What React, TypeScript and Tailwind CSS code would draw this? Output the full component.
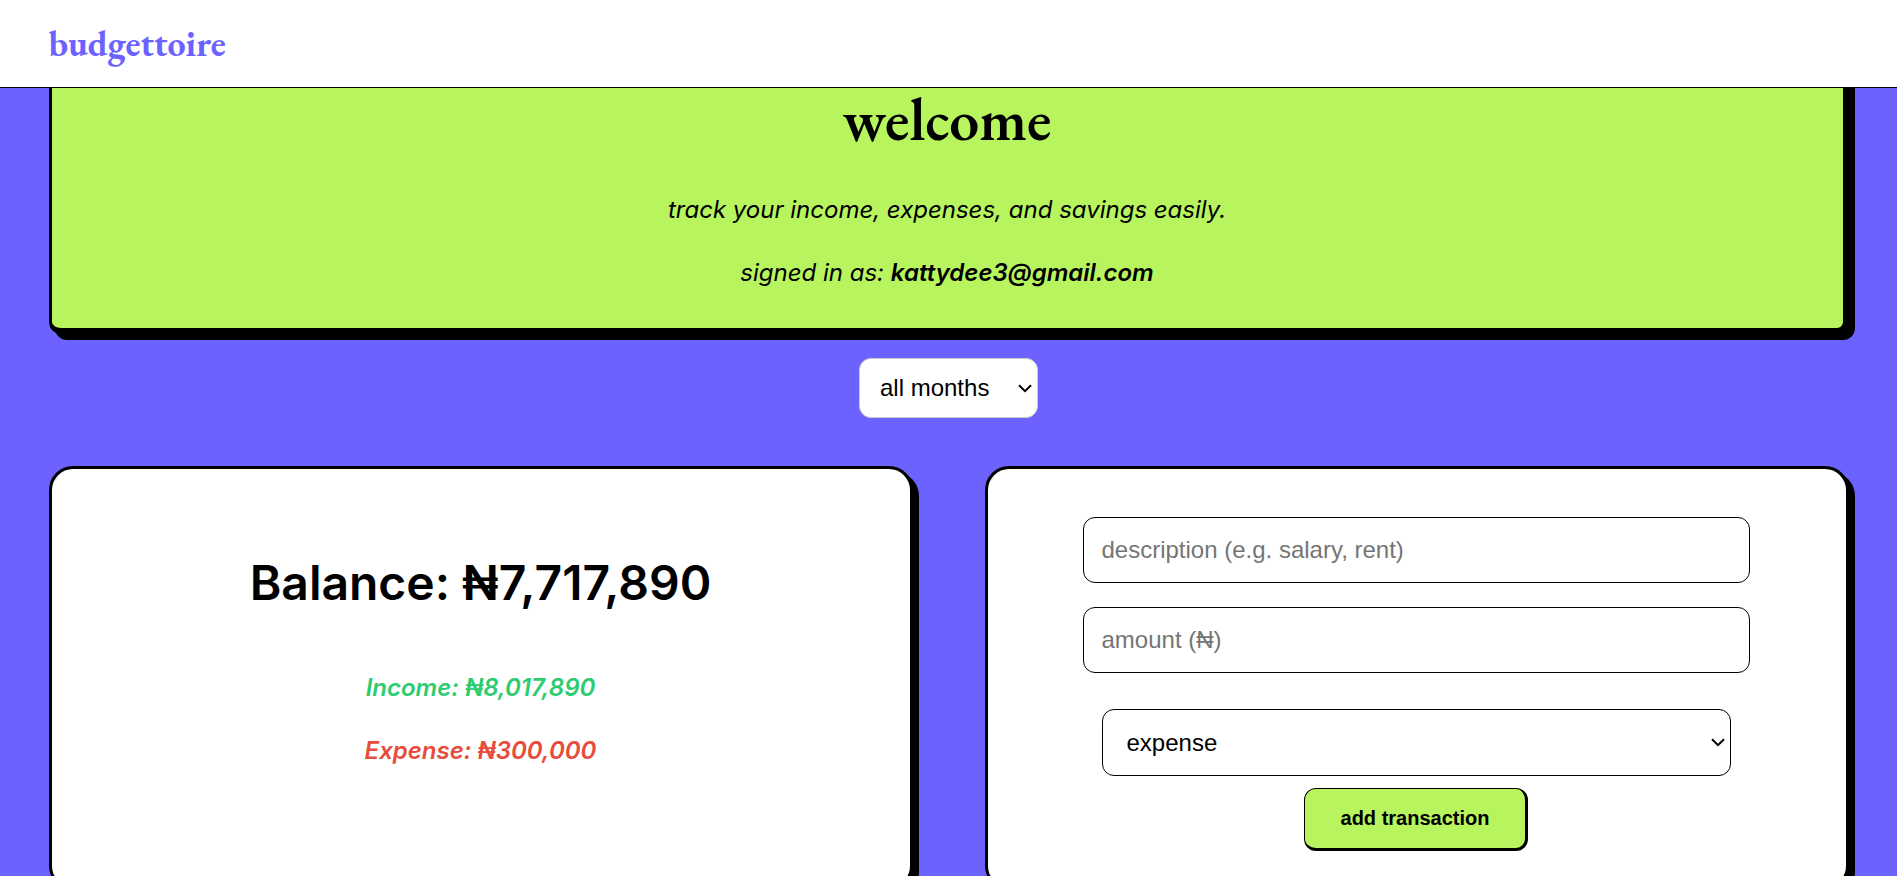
import { useState, type ComponentProps } from "react";

const card =
  "min-h-[424px] rounded-3xl border-[3px] border-black bg-white shadow-[6px_6px_0_#000]";
const field =
  "h-[66px] w-full rounded-xl border border-black bg-white px-[18px] text-2xl text-black placeholder:text-[#757575] placeholder:opacity-100";

function Select({ className, ...props }: ComponentProps<"select">) {
  return (
    <div className="relative">
      <select
        {...props}
        className={`block appearance-none rounded-xl border bg-white font-['Liberation_Sans',Arial,sans-serif] text-2xl text-black ${className}`}
      />
      <svg
        aria-hidden="true"
        viewBox="0 0 14 9"
        className="pointer-events-none absolute inset-y-0 right-1.5 my-auto h-[9px] w-3.5"
        fill="none"
        stroke="currentColor"
        strokeWidth="2"
      >
        <path d="M1 1.2 7 7.2 13 1.2" />
      </svg>
    </div>
  );
}

function Header() {
  return (
    <header className="fixed inset-x-0 top-0 z-10 flex h-[88px] items-center border-b border-black bg-white pt-px">
      <div className="mx-auto w-full max-w-[1800px]">
        <a
          href="#"
          className="font-['EB_Garamond','Liberation_Serif',serif] text-4xl font-bold text-[#6c63ff]"
        >
          budgettoire
        </a>
      </div>
    </header>
  );
}

function Welcome() {
  return (
    <section className="rounded-xl border-[3px] border-r-[6px] border-b-[6px] border-black bg-[#b7f45d] pt-4 pb-9 text-center shadow-[6px_6px_0_#000]">
      <h1 className="font-['EB_Garamond','Liberation_Serif',serif] text-6xl leading-[72px] font-semibold">
        welcome
      </h1>
      <div className="mt-[35px] flex flex-col gap-6 text-2xl leading-[39px] italic">
        <p>track your income, expenses, and savings easily.</p>
        <p>
          signed in as: <strong className="font-semibold">kattydee3@gmail.com</strong>
        </p>
      </div>
    </section>
  );
}

function Summary() {
  return (
    <section className={`${card} pt-[78px] text-center font-semibold`}>
      <h2 className="text-5xl leading-[72px]">Balance: ₦7,717,890</h2>
      <div className="mt-[49px] flex flex-col gap-6 text-2xl leading-[39px] italic">
        <p className="text-[#2ecc71]">Income: ₦8,017,890</p>
        <p className="text-[#e74c3c]">Expense: ₦300,000</p>
      </div>
    </section>
  );
}

function TransactionForm() {
  const [kind, setKind] = useState("expense");
  return (
    <section className={`${card} pt-12 pr-24 pl-[95px]`}>
      <form
        className="flex flex-col items-center font-['Liberation_Sans',Arial,sans-serif]"
        onSubmit={(e) => e.preventDefault()}
      >
        <input
          aria-label="description"
          type="text"
          placeholder="description (e.g. salary, rent)"
          className={field}
        />
        <input
          aria-label="amount"
          type="text"
          inputMode="decimal"
          placeholder="amount (₦)"
          className={`${field} mt-6`}
        />
        <div className="mt-9 w-full px-[19px]">
          <Select
            aria-label="transaction type"
            value={kind}
            onChange={(e) => setKind(e.target.value)}
            className="h-[67px] w-full border-black px-6"
          >
            <option value="expense">expense</option>
            <option value="income">income</option>
          </Select>
        </div>
        <button
          type="submit"
          className="mt-3 rounded-xl border border-r-[3px] border-b-[3px] border-black bg-[#b7f45d] px-9 py-[18px] text-xl leading-[23px] font-bold"
        >
          add transaction
        </button>
      </form>
    </section>
  );
}

export default function App() {
  return (
    <div className="h-screen overflow-y-auto bg-[#6c63ff] font-['Inter',sans-serif] text-black [scrollbar-width:none]">
      <Header />
      <main className="mx-auto max-w-[1800px] pt-16 pb-12">
        <Welcome />
        <div className="mt-6 flex justify-center">
          <Select
            aria-label="month"
            className="h-[60px] w-[179px] border-[#ccc] pr-6 pl-5"
          >
            <option>all months</option>
          </Select>
        </div>
        <div className="mt-12 grid grid-cols-2 gap-[72px]">
          <Summary />
          <TransactionForm />
        </div>
      </main>
    </div>
  );
}
